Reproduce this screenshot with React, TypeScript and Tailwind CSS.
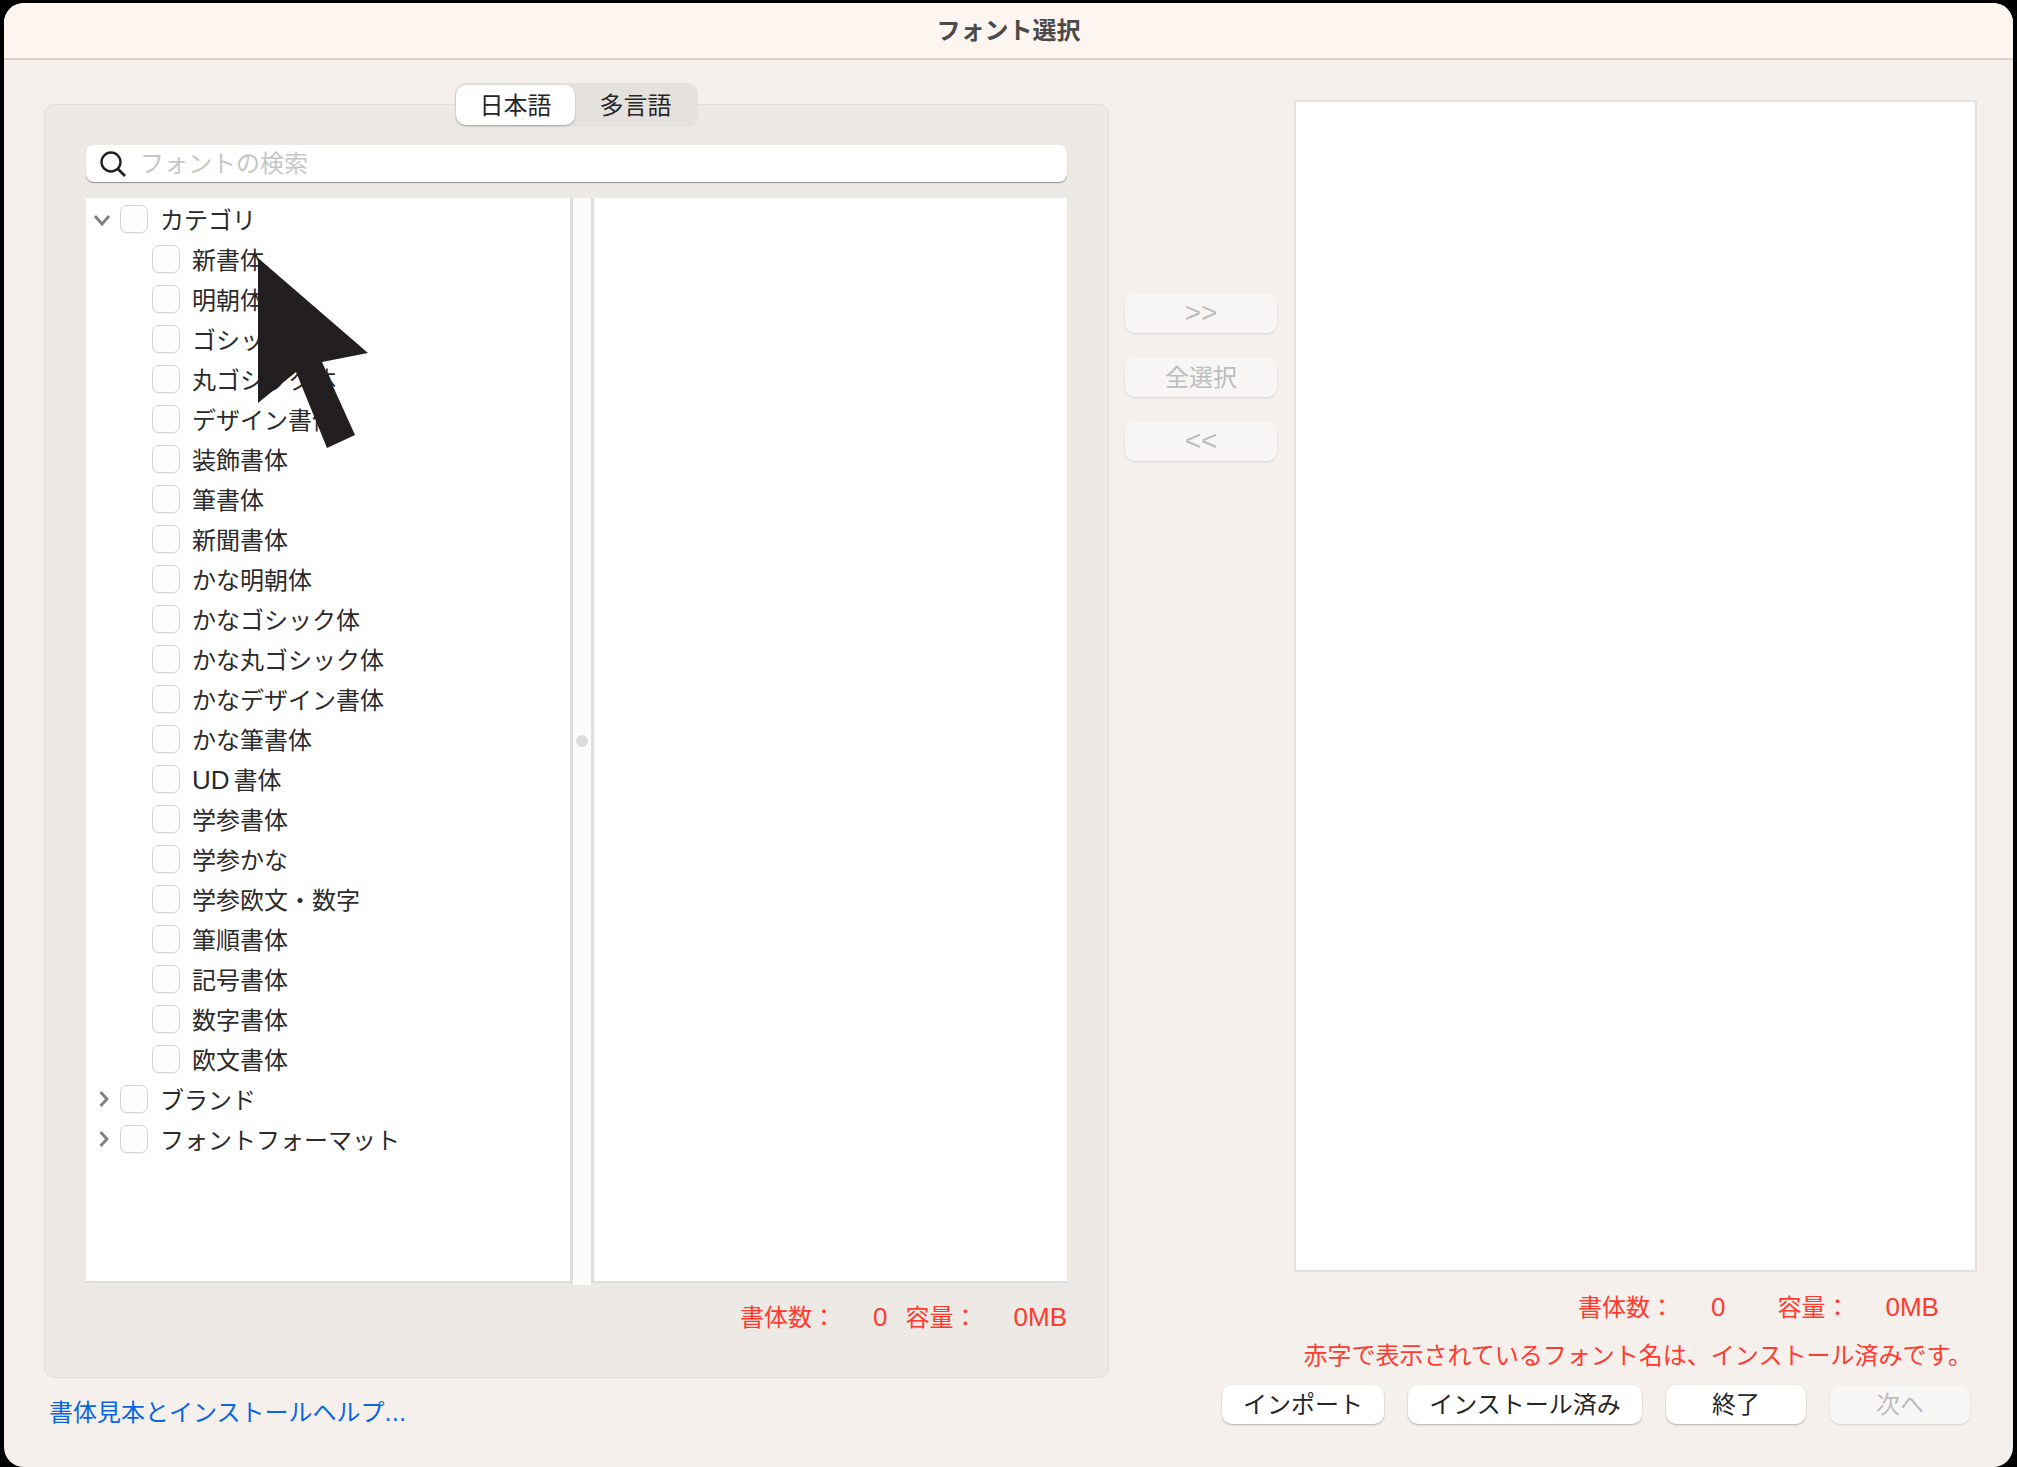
import React from "react";

const sub = ["新書体","明朝体","ゴシック体","丸ゴシック体","デザイン書体","装飾書体","筆書体","新聞書体","かな明朝体","かなゴシック体","かな丸ゴシック体","かなデザイン書体","かな筆書体","UD 書体","学参書体","学参かな","学参欧文・数字","筆順書体","記号書体","数字書体","欧文書体"];

function Latin({ children, className = "" }: { children: React.ReactNode; className?: string }) {
  return <span className={`font-['Liberation_Sans',sans-serif] font-normal text-[26px] ${className}`}>{children}</span>;
}

function Check() {
  return <span className="block w-[28px] h-[28px] shrink-0 rounded-[7px] border border-[#d4d4d4] bg-[#fdfdfd] shadow-[0_1px_1px_rgba(0,0,0,0.06)]" />;
}

function Top({ label, open }: { label: string; open?: boolean }) {
  return (
    <div className="flex items-center h-[40px]">
      <span className="w-[34px] h-[40px] shrink-0 flex items-center justify-center">
        {open ? (
          <svg width="18" height="13" viewBox="0 0 18 13" className="ml-[-3px] mt-[2px]"><path d="M2 2l7 8 7-8" fill="none" stroke="#7f7f7f" strokeWidth="2.8" /></svg>
        ) : (
          <svg width="12" height="18" viewBox="0 0 12 18" className="ml-[2px]"><path d="M2.5 2l6.5 7-6.5 7" fill="none" stroke="#7f7f7f" strokeWidth="2.8" /></svg>
        )}
      </span>
      <Check />
      <span className="ml-[12px]">{label}</span>
    </div>
  );
}

function Btn({ label, w, disabled, latin }: { label: string; w: string; disabled?: boolean; latin?: boolean }) {
  return (
    <button
      className={`${w} rounded-[10px] flex items-center justify-center text-[24px] ${latin ? "" : "pb-[3px]"} ${
        disabled
          ? "bg-[#f8f6f4] text-[#bcbcbc] shadow-[0_1px_2px_rgba(0,0,0,0.12)]"
          : "bg-white text-[#262626] shadow-[0_1px_2px_rgba(0,0,0,0.28)]"
      }`}
    >
      {latin ? <Latin className="text-[28px]">{label}</Latin> : label}
    </button>
  );
}

export default function App() {
  return (
    <div className="relative w-[2017px] h-[1467px] bg-black pt-[3px] px-[4px] overflow-hidden font-['Noto_Sans_CJK_JP',sans-serif] text-[24px] leading-[32px] font-normal text-[#2b2b2b]">
      <div className="h-[1464px] rounded-[20px] overflow-hidden bg-[#f5f0eb] flex flex-col">
        <div className="h-[57px] shrink-0 bg-[#fdf5ef] border-b-2 border-[#d8d3ce] flex items-center justify-center pb-[4px] text-[24px] font-bold text-[#4b4a48]">
          フォント選択
        </div>

        <div className="flex items-start h-[1319px] shrink-0">
          <div className="ml-[40px] mt-[44px] w-[1065px] h-[1274px] shrink-0 rounded-[10px] bg-[#ede9e4] border border-[#e2ded9] px-[41px]">
            <div className="w-[243px] h-[44px] ml-[369px] -mt-[22px] rounded-[11px] bg-[#e5e1dc] p-[2px] pl-[1px] flex">
              <span className="w-[119px] rounded-[10px] bg-white shadow-[0_1px_2px_rgba(0,0,0,0.3)] flex items-center justify-center pb-[2px] text-[#262626]">日本語</span>
              <span className="flex-1 flex items-center justify-center pb-[2px] text-[#262626]">多言語</span>
            </div>

            <div className="mt-[18px] h-[37px] rounded-[8px] bg-white shadow-[0_1px_1px_rgba(0,0,0,0.4)] flex items-center pl-[13px]">
              <svg width="28" height="28" viewBox="0 0 28 28" className="shrink-0">
                <circle cx="12" cy="12" r="9.5" fill="none" stroke="#222" strokeWidth="2.4" />
                <path d="M19 19l7 7" stroke="#222" strokeWidth="2.8" />
              </svg>
              <span className="ml-[13px] pb-[3px] text-[#c6c6c6]">フォントの検索</span>
            </div>

            <div className="mt-[16px] h-[1087px] flex items-stretch">
              <div className="w-[487px] h-[1085px] bg-white border-r-[3px] border-b-2 border-[#dfdfdf] pt-[1px]">
                <Top label="カテゴリ" open />
                {sub.map((s) => (
                  <div key={s} className="flex items-center h-[40px] pl-[66px]">
                    <Check />
                    {s.startsWith("UD") ? (
                      <span className="ml-[12px] flex items-baseline">
                        <Latin>UD</Latin>
                        <span className="ml-[4px]">書体</span>
                      </span>
                    ) : (
                      <span className="ml-[12px]">{s}</span>
                    )}
                  </div>
                ))}
                <Top label="ブランド" />
                <Top label="フォントフォーマット" />
              </div>
              <div className="w-[18px] bg-[#fbfbfb] flex items-center justify-center">
                <span className="block w-[12px] h-[12px] rounded-full bg-[#dcdcdc] mt-[-2px]" />
              </div>
              <div className="flex-1 h-[1085px] bg-white border-l-[3px] border-b-2 border-[#dfdfdf]" />
            </div>

            <div className="mt-[15px] flex items-baseline justify-end text-[#ff3b30]">
              <span>書体数：</span>
              <Latin className="ml-[37px]">0</Latin>
              <span className="ml-[18px]">容量：</span>
              <Latin className="ml-[36px]">0MB</Latin>
            </div>
          </div>

          <div className="ml-[16px] mt-[233px] w-[152px] shrink-0 flex flex-col gap-[24px]">
            <Btn label=">>" w="w-full h-[40px]" disabled latin />
            <Btn label="全選択" w="w-full h-[40px]" disabled />
            <Btn label="<<" w="w-full h-[40px]" disabled latin />
          </div>

          <div className="ml-[17px] mt-[40px] w-[683px] shrink-0 text-[#ff3b30]">
            <div className="h-[1172px] bg-white border-2 border-[#e2e2e2]" />
            <div className="mt-[18px] pl-[284px] flex items-baseline">
              <span>書体数：</span>
              <Latin className="ml-[37px]">0</Latin>
              <span className="ml-[52px]">容量：</span>
              <Latin className="ml-[36px]">0MB</Latin>
            </div>
            <div className="mt-[15px] pr-[5px] text-right">赤字で表示されているフォント名は、インストール済みです。</div>
          </div>
        </div>

        <div className="flex items-start justify-between pl-[45px] pr-[43px] pt-[6px]">
          <a className="mt-[10px] text-[#0a66e0]">書体見本とインストールヘルプ<Latin>...</Latin></a>
          <div className="flex gap-[24px]">
            <Btn label="インポート" w="w-[162px] h-[39px]" />
            <Btn label="インストール済み" w="w-[234px] h-[39px]" />
            <Btn label="終了" w="w-[140px] h-[39px]" />
            <Btn label="次へ" w="w-[140px] h-[39px]" disabled />
          </div>
        </div>
      </div>

      <svg className="absolute left-0 top-0 pointer-events-none" width="400" height="460" viewBox="0 0 400 460">
        <polygon points="258,258 368,353 322,362 355,435 327,448 296,372 258,403" fill="#231f20" />
      </svg>
    </div>
  );
}
